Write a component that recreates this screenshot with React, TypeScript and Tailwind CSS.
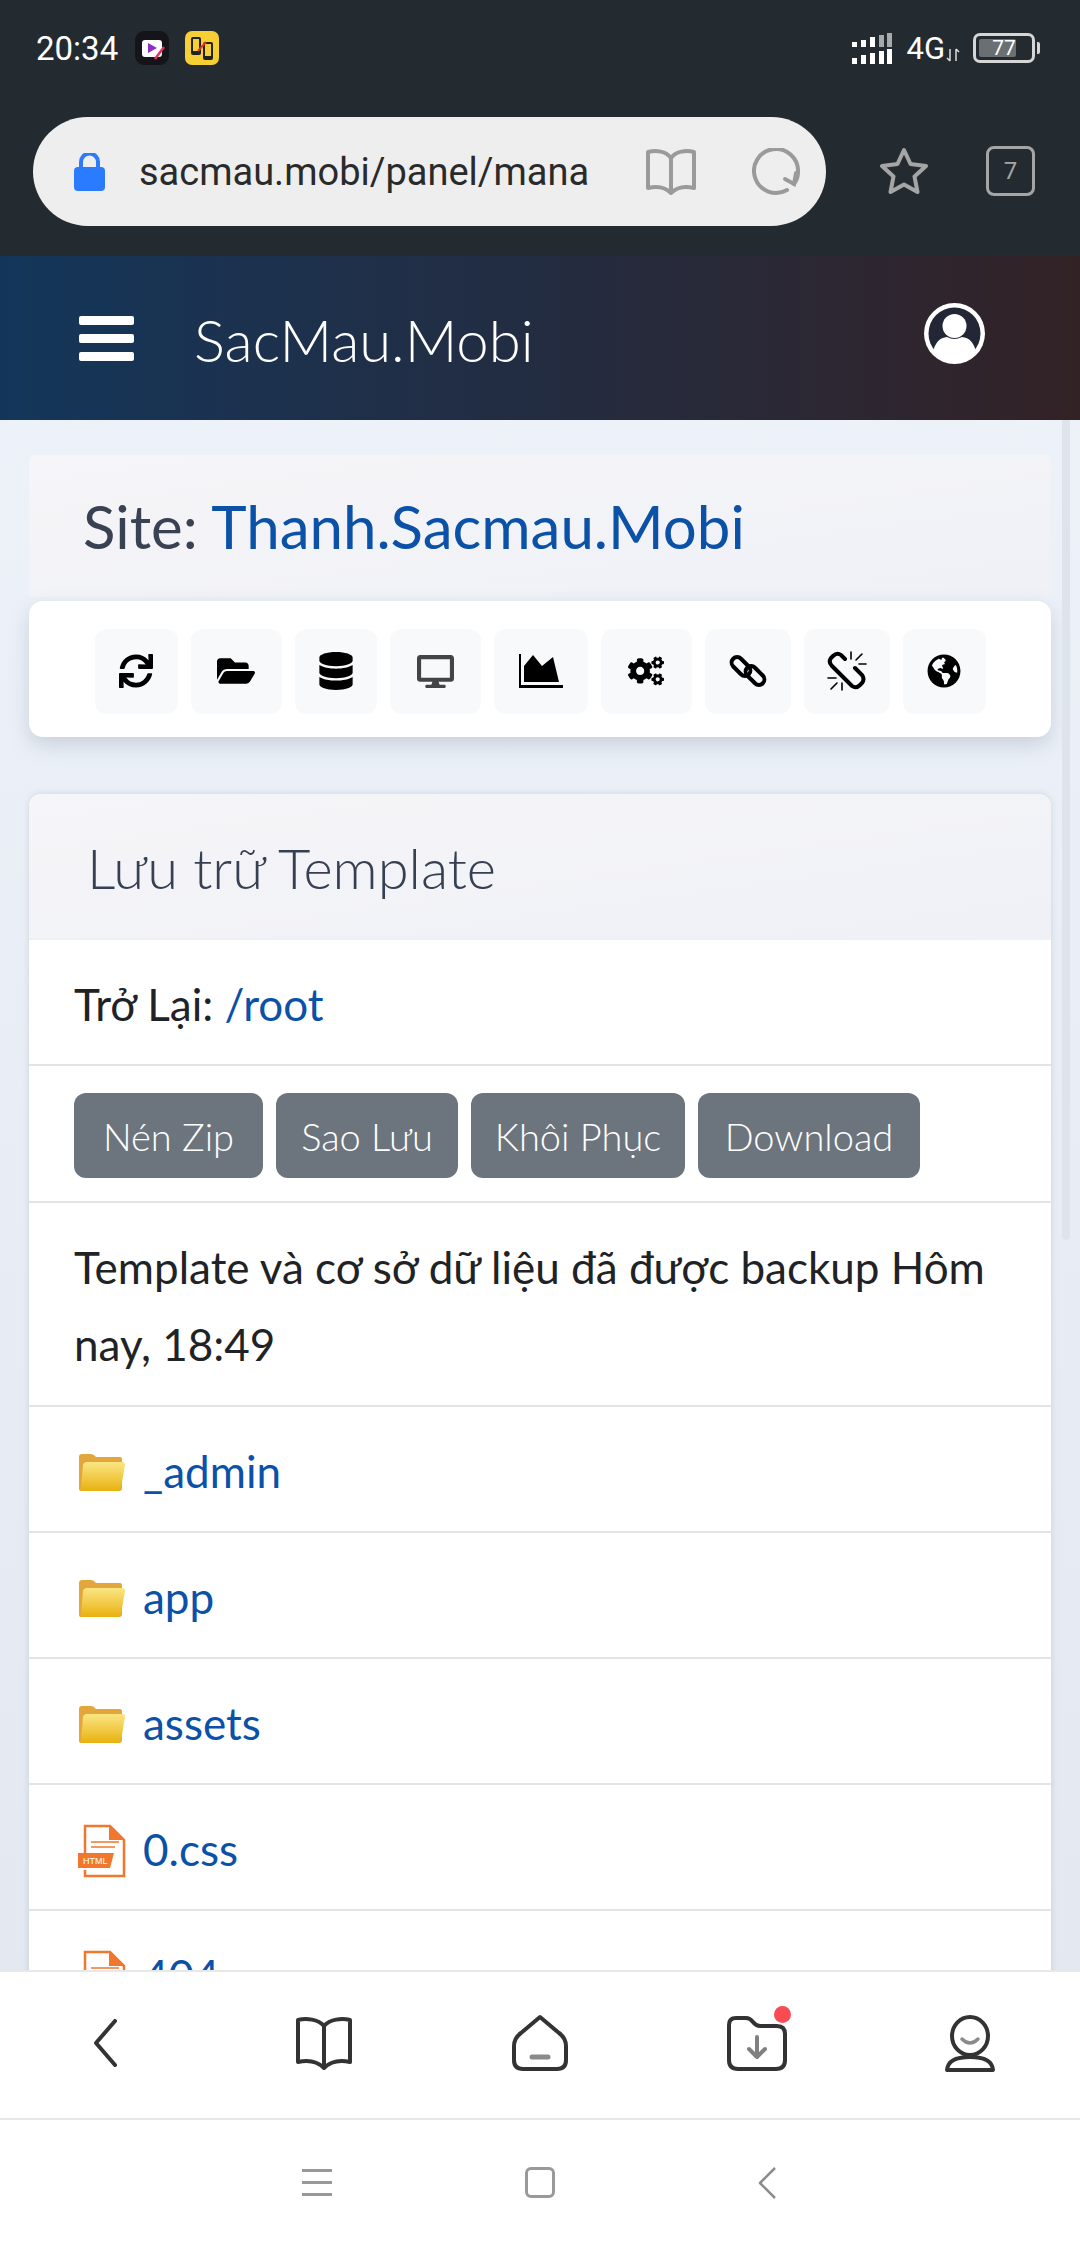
import { FaCogs, FaDatabase, FaDesktop, FaFolderOpen, FaGlobeAmericas, FaSync } from 'react-icons/fa';

const FUTURA = "font-['Lato',sans-serif]";

function LinkIcon() {
	return (
		<svg width="40" height="40" viewBox="0 0 40 40" fill="none" stroke="#000" strokeWidth="4">
			<rect x="2" y="10" width="22" height="11" rx="5.5" transform="rotate(45 13 15.5)" />
			<rect x="16" y="19" width="22" height="11" rx="5.5" transform="rotate(45 27 24.5)" />
		</svg>
	);
}

function UnlinkIcon() {
	return (
		<svg width="40" height="40" viewBox="0 0 40 40" fill="none" stroke="#000" strokeWidth="4" strokeLinecap="round">
			<path d="M18 8L14 4Q10 1 6 5L4 7Q1 11 5 15L25 35Q29 38 33 34L35 32Q38 28 35 24L28 17" />
			<path d="M24 1v7M29 9l6-6M32 13h7M1 27h8M4 38l6-6M15 32v7" strokeWidth="1.6" />
		</svg>
	);
}

function AreaIcon() {
	return (
		<svg width="44" height="34" viewBox="0 0 44 34" fill="#000">
			<path d="M0 0h2v31h42v3H0z" />
			<path d="M5 28V12L14 1l9 11 11-9 6 25z" />
		</svg>
	);
}

function FolderIcon() {
	return (
		<svg className="mt-[6px]" width="46" height="37" viewBox="0 0 46 37">
			<defs>
				<linearGradient id="folderFront" x1="0" y1="0" x2="0" y2="1">
					<stop offset="0" stopColor="#fbe684" />
					<stop offset="1" stopColor="#e8b10f" />
				</linearGradient>
			</defs>
			<path d="M0 3q0-3 3-3h9q3 0 5 3h24q2 0 2 3v28q0 3-3 3H2q-2 0-2-2z" fill="#e3a63a" />
			<path d="M4 11q0-2 3-3h37q2 0 2 3l-4 23q-1 3-3 3H2q-1 0 0-3z" fill="url(#folderFront)" />
		</svg>
	);
}

function HtmlFileIcon() {
	return (
		<svg className="mt-[8px]" width="48" height="54" viewBox="0 0 48 54" fill="none">
			<path d="M7 32V2h25l14 14v36H7v-6" stroke="#f0772d" strokeWidth="2.5" />
			<path d="M31 1l16 15H31z" fill="#f0772d" />
			<path d="M13 18h28M13 23h24" stroke="#f0772d" strokeWidth="1.6" />
			<path d="M0 29h36l-4 15H0z" fill="#f0772d" />
			<text x="5" y="40" fontSize="9" fill="#fff" fontFamily="Liberation Sans, sans-serif">HTML</text>
		</svg>
	);
}

function StatusBar() {
	return (
		<div className="flex h-[95px] items-center justify-between pl-[36px] pr-[45px] pt-[1px] font-['Roboto',sans-serif] text-white">
			<div className="flex items-center">
				<span className="text-[33px] leading-none">20:34</span>
				<svg className="ml-[17px]" width="34" height="34" viewBox="0 0 34 34">
					<rect width="34" height="34" rx="9" fill="#14141a" />
					<rect x="7" y="9" width="20" height="17" rx="3" fill="#fff" />
					<path d="M13 12l9 5-9 5z" fill="#8b2fc9" />
					<path d="M20 28l9-12" stroke="#e0335f" strokeWidth="2.5" />
				</svg>
				<svg className="ml-[16px]" width="34" height="34" viewBox="0 0 34 34">
					<rect width="34" height="34" rx="7" fill="#f6cf35" />
					<rect x="6" y="6" width="10" height="18" rx="2" fill="#222" />
					<rect x="18" y="11" width="10" height="18" rx="2" fill="#222" />
					<rect x="8" y="8" width="6" height="12" fill="#f6cf35" />
					<rect x="20" y="13" width="6" height="12" fill="#f6cf35" />
					<path d="M13 20l8-9" stroke="#e53322" strokeWidth="2" />
				</svg>
			</div>
			<div className="flex items-center">
				<svg width="40" height="31" viewBox="0 0 40 31" fill="#fff">
					<rect x="0" y="9" width="5" height="5" />
					<rect x="9" y="7" width="5" height="7" />
					<rect x="18" y="4" width="5" height="10" />
					<rect x="27" y="2" width="5" height="12" opacity="0.6" />
					<rect x="35" y="0" width="5" height="14" opacity="0.6" />
					<rect x="0" y="25" width="5" height="6" />
					<rect x="9" y="22" width="5" height="9" />
					<rect x="18" y="20" width="5" height="11" />
					<rect x="27" y="18" width="5" height="13" />
					<rect x="35" y="16" width="5" height="15" />
				</svg>
				<span className="ml-[14px] text-[31px] leading-none">4G</span>
				<svg className="ml-[1px] mt-[14px]" width="14" height="14" viewBox="0 0 14 14" stroke="#ddd" strokeWidth="1.5" fill="none">
					<path d="M4 1v12M1 10l3 3M10 13V1M13 4l-3-3" />
				</svg>
				<div className="relative ml-[13px] flex h-[30px] w-[62px] items-center rounded-[7px] border-[3px] border-[#d6d6d6] p-[3px]">
					<div className="h-full w-[74%] rounded-[2px] bg-[#6a6f72]" />
					<span className="absolute inset-0 flex items-center justify-center text-[21px] leading-none text-white">77</span>
					<div className="absolute -right-[8px] top-[6px] h-[12px] w-[3px] rounded-r-[2px] bg-[#d6d6d6]" />
				</div>
			</div>
		</div>
	);
}

function BrowserBar() {
	return (
		<div className="flex h-[161px] items-start pl-[33px] pt-[22px]">
			<div className="flex h-[109px] w-[793px] items-center rounded-full bg-[#eeeeee] pl-[41px]">
				<svg width="31" height="38" viewBox="0 0 31 38">
					<path d="M7 16V9a8.5 8.5 0 0 1 17 0v7" stroke="#2a7bff" strokeWidth="4" fill="none" />
					<rect y="14" width="31" height="24" rx="4" fill="#2a7bff" />
				</svg>
				<span className="ml-[34px] w-[452px] whitespace-nowrap font-['Roboto',sans-serif] text-[38px] leading-none text-[#2a2a2a]">
					sacmau.mobi/panel/mana
				</span>
				<svg className="ml-[55px]" width="50" height="47" viewBox="0 0 50 47" fill="none" stroke="#9a9a9a" strokeWidth="4" strokeLinejoin="round">
					<path d="M25 10C20 3 10 2 2 4v36c8-2 17-1 23 5 6-6 15-7 23-5V4c-8-2-18-1-23 6zM25 10v35" />
				</svg>
				<svg className="ml-[56px]" width="48" height="48" viewBox="0 0 48 48" fill="none" stroke="#9a9a9a" strokeWidth="4" strokeLinecap="round">
					<path d="M35 42A22 22 0 1 1 46 24q0 7-4 12" />
					<path d="M44 25l-2 11-9-5" />
				</svg>
			</div>
			<svg className="ml-[54px] mt-[30px]" width="48" height="48" viewBox="0 0 48 48" fill="none" stroke="#a5a5a5" strokeWidth="4" strokeLinejoin="round">
				<path d="M24 3l6.5 14 15.5 2-11.500 10.500 3 15.500L24 37.500 10.500 45l3-15.500L2 19l15.500-2z" />
			</svg>
			<div className="ml-[58px] mt-[29px] flex h-[50px] w-[49px] items-center justify-center rounded-[8px] border-[3px] border-[#a5a5a5] font-['Roboto',sans-serif] text-[24px] text-[#a5a5a5]">
				7
			</div>
		</div>
	);
}

function SiteHeader() {
	return (
		<div className="flex h-[164px] items-center bg-gradient-to-r from-[#12365a] via-[#232c41] to-[#322226] pl-[79px] pr-[95px]">
			<div className="flex h-[45px] w-[55px] flex-col justify-between">
				<div className="h-[9px] rounded-[2px] bg-white" />
				<div className="h-[9px] rounded-[2px] bg-white" />
				<div className="h-[9px] rounded-[2px] bg-white" />
			</div>
			<span className={`ml-[60px] mt-[4px] ${FUTURA} text-[58px] font-light leading-none text-white`}>SacMau.Mobi</span>
			<svg className="ml-auto -mt-[10px]" width="61" height="61" viewBox="0 0 61 61">
				<circle cx="30.500" cy="30.500" r="30.500" fill="#fff" />
				<circle cx="30.500" cy="30.500" r="26" fill="#232634" />
				<circle cx="30.500" cy="23" r="12" fill="#fff" />
				<path d="M9 49q3-14 14-15 7 4 15 0 11 1 14 15-9 9-21.500 9T9 49z" fill="#fff" />
			</svg>
		</div>
	);
}

const TOOLS = [
	{ w: 'w-[83px]', icon: <FaSync size={34} /> },
	{ w: 'w-[91px]', icon: <FaFolderOpen size={38} /> },
	{ w: 'w-[82px]', icon: <FaDatabase size={38} /> },
	{ w: 'w-[91px]', icon: <FaDesktop size={37} color="#444" /> },
	{ w: 'w-[94px]', icon: <AreaIcon /> },
	{ w: 'w-[91px]', icon: <FaCogs size={36} /> },
	{ w: 'w-[86px]', icon: <LinkIcon /> },
	{ w: 'w-[86px]', icon: <UnlinkIcon /> },
	{ w: 'w-[83px]', icon: <FaGlobeAmericas size={34} /> },
];

const BUTTONS = [
	{ label: 'Nén Zip', w: 'w-[189px]' },
	{ label: 'Sao Lưu', w: 'w-[182px]' },
	{ label: 'Khôi Phục', w: 'w-[214px]' },
	{ label: 'Download', w: 'w-[222px]' },
];

function FileRow({ name, kind }: { name: string; kind: 'folder' | 'file' }) {
	return (
		<div className="flex h-[126px] items-center border-b-[2.5px] border-[#e3e4e6] pl-[49px]">
			<div className="flex w-[48px] justify-center">{kind === 'folder' ? <FolderIcon /> : <HtmlFileIcon />}</div>
			<a className={`ml-[17px] mt-[3px] ${FUTURA} text-[44px] leading-none text-[#0b51a8]`}>{name}</a>
		</div>
	);
}

function Main() {
	return (
		<div className="relative min-h-0 flex-1 overflow-hidden bg-gradient-to-b from-[#edf2f9] to-[#e3e8f1] px-[29px] pt-[35px]">
			<div className="flex h-[142px] items-center rounded-t-[6px] bg-gradient-to-br from-[#f6f5f8] to-[#eff1f7] pl-[54px]">
				<span className={`${FUTURA} text-[60px] leading-none text-[#394253]`}>
					Site: <a className="text-[#0b51a8]">Thanh.Sacmau.Mobi</a>
				</span>
			</div>
			<div className="mt-[4px] flex h-[136px] items-center justify-center gap-[13px] rounded-[14px] bg-white pt-[4px] shadow-[0_8px_20px_rgba(120,130,150,0.28)]">
				{TOOLS.map((tool, i) => (
					<div key={i} className={`flex h-[85px] ${tool.w} items-center justify-center rounded-[12px] bg-[#f8f9fa] text-black`}>
						{tool.icon}
					</div>
				))}
			</div>
			<div className="mt-[57px] overflow-hidden rounded-t-[12px] bg-white shadow-[0_0_6px_rgba(120,130,150,0.25)]">
				<div className="flex h-[146px] items-center border-b-[2px] border-[#eef0f4] bg-gradient-to-br from-[#f6f5f8] to-[#eff1f7] pl-[58px] pt-[4px]">
					<span className={`${FUTURA} text-[56px] font-light leading-none text-[#364052]`}>Lưu trữ Template</span>
				</div>
				<div className={`flex h-[126px] items-center border-b-[2.5px] border-[#e3e4e6] pl-[45px] pt-[4px] ${FUTURA} text-[44px] leading-none text-[#1f2326]`}>
					Trở Lại:&nbsp;<a className="text-[#0b51a8]">/root</a>
				</div>
				<div className="flex h-[137px] items-center gap-[13px] border-b-[2.5px] border-[#e3e4e6] pl-[45px] pt-[4px]">
					{BUTTONS.map((b) => (
						<button key={b.label} className={`flex h-[85px] ${b.w} items-center justify-center rounded-[12px] bg-[#6c757d] ${FUTURA} text-[38px] font-light leading-none text-white`}>
							{b.label}
						</button>
					))}
				</div>
				<div className={`h-[204px] border-b-[2.5px] border-[#e3e4e6] pl-[45px] pr-[30px] pt-[26px] ${FUTURA} text-[44px] leading-[77px] text-[#1f2326]`}>
					Template và cơ sở dữ liệu đã được backup Hôm nay, 18:49
				</div>
				<FileRow name="_admin" kind="folder" />
				<FileRow name="app" kind="folder" />
				<FileRow name="assets" kind="folder" />
				<FileRow name="0.css" kind="file" />
				<FileRow name="404" kind="file" />
			</div>
			<div className="absolute right-[10px] top-0 h-[820px] w-[8px] rounded-b-[4px] bg-[#dfe4ec]" />
		</div>
	);
}

function BottomBars() {
	const stroke = { fill: 'none', stroke: '#333', strokeWidth: 4, strokeLinecap: 'round', strokeLinejoin: 'round' } as const;
	return (
		<div className="bg-white">
			<div className="flex h-[150px] items-start border-y-[2px] border-[#e8e8e8] pt-[35px]">
				<svg className="ml-[93px] mt-[12px]" width="24" height="48" viewBox="0 0 24 48" {...stroke}>
					<path d="M22 2L3 24l19 22" />
				</svg>
				<svg className="ml-[178px] mt-[9px]" width="58" height="55" viewBox="0 0 58 55" {...stroke}>
					<path d="M29 10C23 3 11 2 3 4v42c9-2 19-1 26 6 7-7 17-8 26-6V4c-8-2-20-1-26 6zM29 10v42" />
				</svg>
				<svg className="ml-[158px] mt-[7px]" width="58" height="58" viewBox="0 0 58 58" {...stroke}>
					<path d="M29 3L10 19q-7 5-7 13v14q0 9 9 9h34q9 0 9-9V32q0-8-7-13z" />
					<path d="M21 43h16" stroke="#8a8a8a" strokeWidth="5" />
				</svg>
				<div className="relative ml-[158px] mt-[8px]">
					<svg width="60" height="56" viewBox="0 0 60 56" {...stroke}>
						<path d="M2 10q0-7 7-7h10q4 0 7 4t7 4h17q8 0 8 8v26q0 9-9 9H11q-9 0-9-9z" />
						<path d="M30 22v20M22 34l8 8 8-8" stroke="#808080" />
					</svg>
					<div className="absolute -top-[9px] left-[47px] h-[17px] w-[17px] rounded-full bg-[#fb4b52]" />
				</div>
				<svg className="ml-[157px] mt-[8px]" width="52" height="58" viewBox="0 0 52 58" {...stroke}>
					<ellipse cx="26" cy="21" rx="18" ry="19" />
					<path d="M18 24q8 8 16 0" stroke="#8a8a8a" strokeWidth="3.500" />
					<path d="M3 55q1-13 23-13t23 13z" />
				</svg>
			</div>
			<div className="flex h-[128px] items-start pt-[47px]">
				<div className="ml-[302px] mt-[2px] flex h-[27px] w-[30px] flex-col justify-between">
					<div className="h-[3px] bg-[#999]" />
					<div className="h-[3px] bg-[#999]" />
					<div className="h-[3px] bg-[#999]" />
				</div>
				<div className="ml-[193px] h-[31px] w-[30px] rounded-[6px] border-[3px] border-[#999]" />
				<svg className="ml-[203px]" width="18" height="32" viewBox="0 0 18 32" fill="none" stroke="#8c8c8c" strokeWidth="2.500" strokeLinejoin="round">
					<path d="M17 1L2 16l15 15" />
				</svg>
			</div>
		</div>
	);
}

export default function App() {
	return (
		<div className="flex h-[2248px] w-[1080px] flex-col overflow-hidden">
			<div className="bg-[#242b30]">
				<StatusBar />
				<BrowserBar />
			</div>
			<SiteHeader />
			<Main />
			<BottomBars />
		</div>
	);
}
